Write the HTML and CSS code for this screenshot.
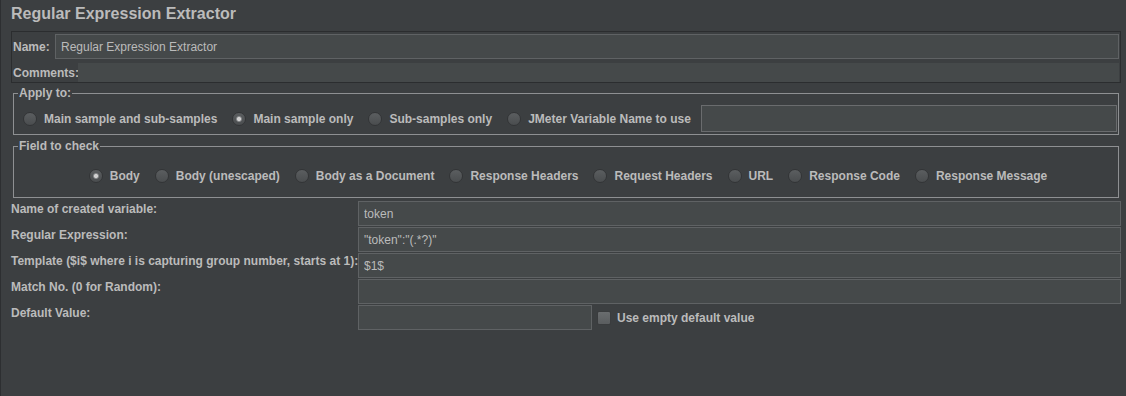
FILE: index.html
```html
<!DOCTYPE html>
<html lang="en">
<head>
  <meta charset="UTF-8">
  <title>Regular Expression Extractor</title>
  <link rel="stylesheet" href="styles.css">
</head>
<body>
  <div class="panel">
    <!-- 제목 -->
    <h1 class="title">Regular Expression Extractor</h1>

    <!-- 이름 / 코멘트 -->
    <div class="nameBox">
      <div class="nameRow">
        <label class="boxLabel nameLabel">Name:</label>
        <input class="textField" type="text" value="Regular Expression Extractor">
      </div>
      <div class="commentRow">
        <label class="boxLabel commentLabel">Comments:</label>
        <div class="commentArea"></div>
      </div>
    </div>

    <!-- Apply to -->
    <fieldset class="group applyGroup">
      <legend>Apply to:</legend>
      <div class="radioRow">
        <label class="option"><span class="radio"></span>Main sample and sub-samples</label>
        <label class="option"><span class="radio checked"></span>Main sample only</label>
        <label class="option"><span class="radio"></span>Sub-samples only</label>
        <label class="option"><span class="radio"></span>JMeter Variable Name to use</label>
        <input class="textField varField" type="text" value="">
      </div>
    </fieldset>

    <!-- Field to check -->
    <fieldset class="group fieldGroup">
      <legend>Field to check</legend>
      <div class="radioRow centered">
        <label class="option"><span class="radio checked"></span>Body</label>
        <label class="option"><span class="radio"></span>Body (unescaped)</label>
        <label class="option"><span class="radio"></span>Body as a Document</label>
        <label class="option"><span class="radio"></span>Response Headers</label>
        <label class="option"><span class="radio"></span>Request Headers</label>
        <label class="option"><span class="radio"></span>URL</label>
        <label class="option"><span class="radio"></span>Response Code</label>
        <label class="option"><span class="radio"></span>Response Message</label>
      </div>
    </fieldset>

    <!-- 입력 폼 -->
    <div class="form">
      <label class="formLabel">Name of created variable:</label>
      <input class="textField" type="text" value="token">

      <label class="formLabel">Regular Expression:</label>
      <input class="textField" type="text" value="&quot;token&quot;:&quot;(.*?)&quot;">

      <label class="formLabel">Template ($i$ where i is capturing group number, starts at 1):</label>
      <input class="textField" type="text" value="$1$">

      <label class="formLabel">Match No. (0 for Random):</label>
      <input class="textField" type="text" value="">

      <label class="formLabel">Default Value:</label>
      <div class="defaultRow">
        <input class="textField defaultField" type="text" value="">
        <label class="option checkOption"><span class="checkbox"></span>Use empty default value</label>
      </div>
    </div>
  </div>
</body>
</html>
```

FILE: styles.css
```css
/* 공통 스타일 */
html, body {
  margin: 0;
  height: 100%;
}

body {
  background: #3c3f41;
  color: #bbbbbb;
  font-family: "Liberation Sans", Arial, sans-serif;
  font-size: 12px;
  border-left: 1px solid #2d2f31;
  box-sizing: border-box;
}

.panel {
  padding: 0 5px 0 10px;
}

/* 제목 */
.title {
  margin: 0 0 7px;
  padding-top: 4px;
  font-size: 16px;
  line-height: 20px;
  font-weight: bold;
}

/* 텍스트 입력칸 */
.textField {
  box-sizing: border-box;
  height: 25px;
  margin: 0;
  padding: 0 5px;
  background: #45494a;
  border: 1px solid #5f6264;
  color: #bbbbbb;
  font-family: inherit;
  font-size: 12px;
  outline: none;
  min-width: 0;
}

/* 이름 / 코멘트 박스 */
.nameBox {
  border: 1px solid #2b2d2f;
  padding: 2px 1px 0;
}

.nameRow {
  display: flex;
  align-items: center;
}

.nameRow .textField {
  flex: 1;
}

.boxLabel {
  font-weight: bold;
  line-height: 16px;
}

.nameLabel {
  width: 42px;
}

.commentRow {
  display: flex;
  align-items: center;
  height: 19px;
  margin-top: 4px;
}

.commentLabel {
  width: 65px;
}

.commentArea {
  flex: 1;
  align-self: stretch;
  background: #45494a;
}

/* 그룹 박스 */
.group {
  margin: 3px 2px 0;
  padding: 0;
  border: 1px solid #8e9092;
  min-width: 0;
}

.group legend {
  margin-left: 4px;
  padding: 0 1px;
  font-weight: bold;
  line-height: 14px;
}

.applyGroup {
  padding: 5px 1px 2px 0;
}

.fieldGroup {
  margin-top: 4px;
  padding: 16px 0 14px;
}

.radioRow {
  display: flex;
  align-items: center;
  gap: 15px;
}

.applyGroup .radioRow {
  padding-left: 9px;
}

.applyGroup .varField {
  flex: 1;
  height: 27px;
  margin-left: -5px;
  border-color: #6a6c6e;
}

.radioRow.centered {
  justify-content: center;
  padding-left: 4px;
  gap: 15px;
}

.option {
  display: flex;
  align-items: center;
  gap: 7px;
  font-weight: bold;
  line-height: 14px;
  white-space: nowrap;
}

/* 라디오 버튼 */
.radio {
  box-sizing: border-box;
  width: 14px;
  height: 14px;
  border-radius: 50%;
  border: 1px solid #333537;
  background: linear-gradient(#5b5e60, #4a4d4f);
  flex: none;
}

.radio.checked {
  background: radial-gradient(circle, #d0d0d0 0 1.6px, #8c8e90 2.4px, rgba(0, 0, 0, 0) 3.4px),
              linear-gradient(#5b5e60, #4a4d4f);
}

/* 체크박스 */
.checkbox {
  box-sizing: border-box;
  width: 14px;
  height: 14px;
  border-radius: 2px;
  border: 1px solid #3a3c3e;
  background: linear-gradient(#6a6d6f, #5a5d5f);
  flex: none;
}

/* 입력 폼 */
.form {
  display: grid;
  grid-template-columns: 347px 1fr;
  row-gap: 1px;
  margin-top: 3px;
}

.formLabel {
  font-weight: bold;
  line-height: 16px;
  white-space: nowrap;
}

.defaultRow {
  display: flex;
  align-items: center;
}

.defaultField {
  width: 234px;
}

.checkOption {
  margin-left: 5px;
  gap: 6px;
}
```
